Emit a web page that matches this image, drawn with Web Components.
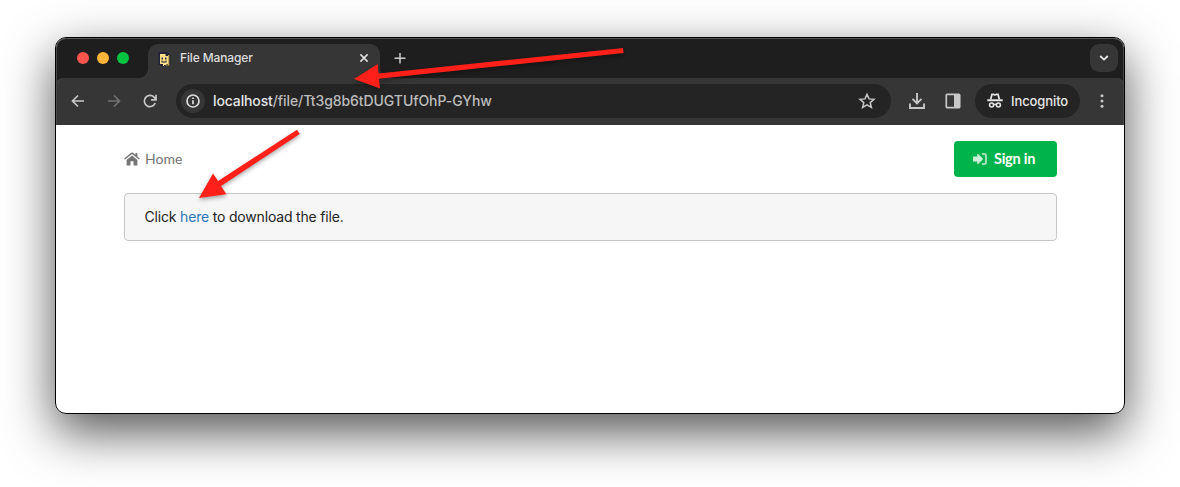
<!DOCTYPE html>
<html lang="en">
<head>
<meta charset="utf-8">
<title>File Manager</title>
<style>
html,body{margin:0;height:100%;background:#fff;overflow:hidden}
body{font-family:Inter,"Liberation Sans",sans-serif;position:relative}
</style>
</head>
<body>
<browser-window>
  <tab-strip slot="tabs">File Manager</tab-strip>
  <address-bar slot="toolbar" host="localhost" path="/file/Tt3g8b6tDUGTUfOhP-GYhw"></address-bar>
  <file-page></file-page>
</browser-window>
<pointer-arrows></pointer-arrows>
<script>
const define = (name, html) => customElements.define(name, class extends HTMLElement {
  constructor() {
    super();
    const t = document.createElement('template');
    t.innerHTML = html;
    this.attachShadow({mode: 'open'}).append(t.content.cloneNode(true));
    for (const el of this.shadowRoot.querySelectorAll('[data-attr]'))
      el.textContent = this.getAttribute(el.dataset.attr);
  }
});

define('browser-window', `
<style>
:host{display:block;box-sizing:border-box;padding:37px 55px 73px;height:487px}
.w{box-sizing:border-box;height:377px;border:1px solid #000;border-radius:11px;background:#fff;display:flex;flex-direction:column;overflow:hidden}
.shade{border-radius:11px;box-shadow:0 18px 50px rgba(0,0,0,.68)}
.chrome{background:#1e1e1e;box-shadow:inset 0 1px #585858,inset 1px 0 #484848,inset -1px 0 #484848;border-radius:10px 10px 0 0}
</style>
<div class="shade"><div class="w"><div class="chrome"><slot name="tabs"></slot><slot name="toolbar"></slot></div><slot></slot></div></div>`);

define('tab-strip', `
<style>
:host{display:flex;height:40px;padding:6px 6px 0 21px;box-sizing:border-box;color:#dedede}
.dots{display:flex;gap:8px;padding-top:8px;width:71px;box-sizing:border-box}
i{width:12px;height:12px;border-radius:50%}
.tab{position:relative;box-sizing:border-box;width:232px;height:34px;background:#363636;border-radius:10px 10px 0 0;display:flex;align-items:flex-start;padding:8px 10px 0 10px}
.tab:before,.tab:after{content:"";position:absolute;bottom:0;width:9px;height:9px}
.tab:before{left:-9px;background:radial-gradient(circle at 0 0,transparent 8.5px,#363636 9px)}
.tab:after{right:-9px;background:radial-gradient(circle at 100% 0,transparent 8.5px,#363636 9px)}
.t{font-size:12px;line-height:14px;font-weight:500;margin:-1px auto 0 9px;white-space:nowrap;letter-spacing:-.13px}
.x{margin:1px 0 0}
.plus{margin:8px 0 0 14px}
.menu{margin-left:auto;width:28px;height:28px;border-radius:9px;background:#363636;display:flex;align-items:center;justify-content:center}
svg{display:block}
</style>
<div class="dots"><i style="background:#ff544d"></i><i style="background:#ffb43a"></i><i style="background:#00c341"></i></div>
<div class="tab">
<svg width="13" height="15" viewBox="0 0 13 15"><path d="M.5 0H9v1h2v2h1.5v9H9v2H3v-1H.5z" fill="#20213b"/><path d="M10 3h1.3v10.5H7.5v-1H10z" fill="#c4aa55"/><path d="M2 2h5.5v2H10v8H8v1H6v1H5v-2H2z" fill="#ffe087"/><path d="M3.5 5.5H5v2H3.5zM7 5.5h1.5v2H7zM3.5 8.5h1v1H7.500v-1h1v2h-5z" fill="#20213b"/></svg>
<span class="t"><slot></slot></span>
<svg class="x" width="11" height="11" viewBox="0 0 11 11"><path d="M1.4 1.4l7.2 7.2M8.6 1.4L1.4 8.600" stroke="#dedede" stroke-width="1.6"/></svg>
</div>
<svg class="plus" width="12" height="12" viewBox="0 0 12 12"><path d="M6 1v10.5M.5 6.2h11" stroke="#cbcbcb" stroke-width="1.5"/></svg>
<div class="menu"><svg width="10" height="6" viewBox="0 0 10 6"><path d="M1.2 1l3.8 3.6L8.8 1" fill="none" stroke="#e8e8e8" stroke-width="1.8"/></svg></div>`);

define('address-bar', `
<style>
:host{display:flex;height:47px;box-sizing:border-box;background:#363636;border-radius:8px 8px 0 0;padding:6px 14px 7px 13px;align-items:center;color:#c7c7c7;box-shadow:inset 1px 0 #484848,inset -1px 0 #484848}
svg{display:block;flex:none;fill:none;stroke:currentColor;stroke-width:1.7}
.field{margin-left:18px;box-sizing:border-box;width:715px;height:34px;border-radius:17px;background:#242424;display:flex;align-items:center;padding:0 15px 0 5px;flex:none}
.info{width:24px;height:24px;border-radius:50%;background:#363636;display:flex;align-items:center;justify-content:center;flex:none}
.url{font-size:14px;line-height:18px;margin:0 auto 0 8px;color:#bcbcbc;white-space:nowrap;font-weight:450;letter-spacing:-.08px}
.url b{font-weight:500;color:#e5e5e5;letter-spacing:-.13px}
.inc{margin-left:14px;box-sizing:border-box;width:105px;height:34px;border-radius:17px;background:#242424;display:flex;align-items:center;padding-left:12px;color:#e5e5e5;font-size:13px;font-weight:500;letter-spacing:-.1px;flex:none}
.inc svg{margin-right:8px}
</style>
<svg style="margin:0 2px 0 1px" width="16" height="16" viewBox="0 0 16 16"><path d="M14 8H3M8 2.5L2.5 8 8 13.5"/></svg>
<svg style="margin-left:18px;color:#737373" width="16" height="16" viewBox="0 0 16 16"><path d="M2 8h11M8 2.500L13.5 8 8 13.5"/></svg>
<svg style="margin-left:20px" width="16" height="16" viewBox="0 0 16 16"><path d="M13.2 10A5.6 5.6 0 1 1 12 4.2L14 6M14 1.8v5H9"/></svg>
<div class="field"><div class="info"><svg width="14" height="14" viewBox="0 0 14 14" style="stroke-width:1.7;color:#dcdcdc"><circle cx="7" cy="7" r="6"/><path d="M7 6.2v4M7 3.6v1.5"/></svg></div>
<span class="url"><b data-attr="host"></b><span data-attr="path"></span></span>
<svg width="18" height="18" viewBox="0 0 18 18" style="stroke-width:1.5"><path d="M9 2.3l2 4.6 5 .4-3.8 3.3 1.2 4.9L9 12.9l-4.4 2.6 1.2-4.9L2 7.3l5-.4z"/></svg></div>
<svg style="margin-left:17px" width="18" height="18" viewBox="0 0 18 18"><g stroke-width="1.9"><path d="M9 1v10M4.5 6.8L9 11.3l4.5-4.500M2 11.5V16h14v-4.5"/></g></svg>
<svg style="margin-left:19px" width="16" height="16" viewBox="0 0 16 16"><rect x="1.3" y="1.3" width="13.4" height="13.4" rx="1"/><path d="M9 1h5.5v14H9z" fill="currentColor" stroke="none"/></svg>
<div class="inc"><svg width="16" height="16" viewBox="0 0 16 16"><path d="M3.7 6.2L5 1.3h1.5L8 2l1.500-.7H11l1.3 4.9" stroke-width="1.8"/><path d="M.3 7.2h15.4" stroke-width="1.9"/><circle cx="4.6" cy="12" r="2" stroke-width="1.6"/><circle cx="11.4" cy="12" r="2" stroke-width="1.6"/><path d="M6.600 11.7q1.400-1 2.8 0" stroke-width="1.4"/></svg>Incognito</div>
<svg style="margin-left:20px" width="4" height="16" viewBox="0 0 4 16"><g fill="currentColor" stroke="none"><circle cx="2" cy="2.7" r="1.5"/><circle cx="2" cy="8" r="1.5"/><circle cx="2" cy="13.3" r="1.5"/></g></svg>`);

define('file-page', `
<style>
:host{display:block;padding:16px 67px 0 68px;background:#fff}
header{display:flex;justify-content:space-between;align-items:center;height:36px;font-family:Lato,sans-serif}
.home{display:flex;align-items:center;color:#737373;font-size:14px;line-height:20px}
.home svg{margin-right:5px}
button{box-sizing:border-box;width:103px;height:36px;border:0;border-radius:4px;background:#00b34a;color:#fff;font:bold 14.5px/20px Lato,sans-serif;letter-spacing:-.25px;display:flex;align-items:center;padding:0 0 0 19px;white-space:nowrap}
button svg{margin-right:7px}
.msg{margin-top:16px;box-sizing:border-box;height:48px;border:1px solid #c6c6c6;border-radius:4px;background:#f6f6f6;padding:0 19.5px;font-size:14px;line-height:46px;color:#242424;white-space:nowrap;letter-spacing:-.18px}
a{color:#2a77b9;text-decoration:none}
</style>
<header><span class="home"><svg width="16" height="14" viewBox="0 0 16 14" fill="#767676"><path d="M8 3.400l-5.400 4.500V13q0 .6.6.6h3.300V9.300h3v4.300h3.300q.6 0 .6-.6V7.900z"/><path d="M8 .4q.5 0 .9.3l2.600 2.100V1h1.900v3.400L15.900 6.500l-.9 1.100L8 1.900 1 7.600.1 6.500l7-5.800q.4-.3.9-.3z"/></svg>Home</span>
<button><svg width="14" height="12" viewBox="0 0 14 12" opacity=".8"><path d="M0 4q0-.6.6-.6h3.700V1.200q.1-.8.900-.3l4.600 4.500q.4.600 0 1.100L5.200 11q-.8.5-.9-.3V8.600H.6Q0 8.600 0 8z" fill="#fff"/><path d="M9 1h2.500q1.500 0 1.500 1.500v7q0 1.500-1.500 1.500H9" fill="none" stroke="#fff" stroke-width="1.5"/></svg>Sign in</button></header>
<div class="msg">Click <a>here</a> to download the file.</div>`);

define('pointer-arrows', `
<style>:host{position:absolute;inset:0;pointer-events:none}svg{display:block;filter:drop-shadow(0 2px 2px rgba(0,0,0,.35))}</style>
<svg width="1180" height="487" viewBox="0 0 1180 487" fill="#ff2019"><path d="M354 79L377.7 64l.9 9.6L623 48l.6 5L379 78.800l1 9.800z"/><path d="M199 198l14-24.500 5.100 7.600L297 129.700l2.800 4.200L221 186l5.400 8.300z"/></svg>`);
</script>
</body>
</html>
